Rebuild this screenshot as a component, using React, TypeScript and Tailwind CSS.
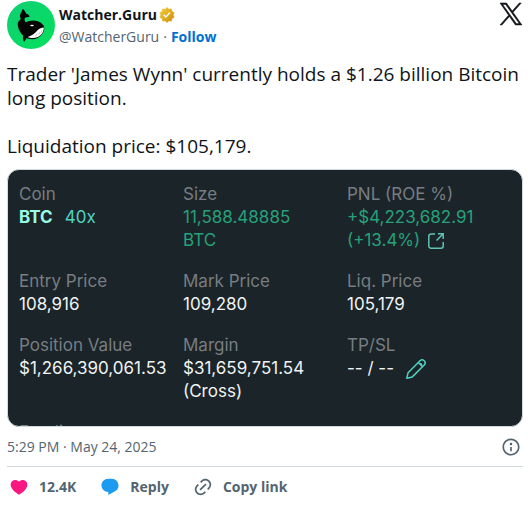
import React from 'react'

interface PositionField {
  label: string
  content: React.ReactNode
}

function ExternalIcon() {
  return (
    <svg viewBox="0 0 16 16" className="h-4 w-4 shrink-0" fill="none" stroke="#5fc4b3" strokeWidth="1.5">
      <path d="M7 1H3a2.2 2.2 0 0 0-2.2 2.2V13A2.2 2.2 0 0 0 3 15.2h10a2.2 2.2 0 0 0 2.2-2.2V9" />
      <path d="M10 .8h5.2V6M15 1L8.5 7.500" />
    </svg>
  )
}

function PencilIcon() {
  return (
    <svg viewBox="0 0 20 20" className="block h-5 w-5" fill="none" stroke="#50d2c1" strokeWidth="1.5" strokeLinejoin="round">
      <path d="M.8 19.200l1.300-5.500L14 1.800a2.550 2.550 0 0 1 4.200 4.200L6.300 17.900z" />
      <path d="M12.300 3.500l4.200 4.200M14.200 4.400c1 .1 1.500.6 1.500 1.500" />
    </svg>
  )
}

const fields: PositionField[] = [
  {
    label: 'Coin',
    content: (
      <div className="flex gap-3 text-[#50d2c1]">
        <span className="font-bold text-[#97fce4]">BTC</span>
        <span>40x</span>
      </div>
    ),
  },
  {
    label: 'Size',
    content: (
      <div className="text-[#26a17b]">
        11,588.48885
        <br />
        BTC
      </div>
    ),
  },
  {
    label: 'PNL (ROE %)',
    content: (
      <div className="text-[#26a17b]">
        +$4,223,682.91
        <div className="flex items-center gap-2">
          (+13.4%)
          <a href="#share" aria-label="Share position">
            <ExternalIcon />
          </a>
        </div>
      </div>
    ),
  },
  { label: 'Entry Price', content: '108,916' },
  { label: 'Mark Price', content: '109,280' },
  { label: 'Liq. Price', content: '105,179' },
  { label: 'Position Value', content: '$1,266,390,061.53' },
  {
    label: 'Margin',
    content: (
      <>
        $31,659,751.54
        <br />
        (Cross)
      </>
    ),
  },
  {
    label: 'TP/SL',
    content: (
      <div className="flex items-center gap-3">
        -- / --
        <button type="button" aria-label="Edit TP/SL">
          <PencilIcon />
        </button>
      </div>
    ),
  },
  { label: 'Funding', content: '' },
]

function Avatar() {
  return (
    <svg viewBox="0 0 48 48" className="h-12 w-12 shrink-0">
      <defs>
        <linearGradient id="avatar" x1="0" y1="0" x2="1" y2="1">
          <stop offset="0" stopColor="#10cf74" />
          <stop offset="1" stopColor="#03e05c" />
        </linearGradient>
      </defs>
      <circle cx="24" cy="24" r="24" fill="url(#avatar)" />
      <path
        d="M15.500 8c2 .8 2.800 2.700 3.700 4.800 1.600.2 3.300 1.300 3.300 3.200-1.700.2-3.800 0-4.600 1.100-.9 1.200-.3 3.400 1 4.400 4-2.500 11.500-2.800 15.500.8 1.900 1.700 3 3.300 2.900 5.200-.2 5.100-5.200 10.500-11.800 10.700-2.900.1-4.600-.5-6.100-1.200-.5 1.600-1.300 2.800-2.500 3.700-.9-2-1.200-4.300-.7-6.100-3-2.900-5.600-7.200-5.500-12.100.1-2.300 2.600-3.200 3.200-5-.9-1.100-1.100-2.300-.8-3.600.5-1.900 1.900-3.500 2.400-5.900z"
        fill="#050505"
      />
      <path
        d="M36.800 26.500c-2.300.3-4.300.7-6 2.600-2.600 3-5.800 5.900-10 6.800 2.300 1.300 6.600 1.700 10 .1 4-1.900 6.200-5.700 6-9.500z"
        fill="#fff"
      />
      <path d="M28.500 35.500l1.500-3M31.500 34l1.500-3M34 31.500l1-2" stroke="#999" strokeWidth=".5" />
      <ellipse cx="25" cy="24.500" rx="1.800" ry=".8" fill="#fff" />
    </svg>
  )
}

function GoldBadge() {
  return (
    <svg viewBox="1 1 20 20" className="h-4 w-4" role="img" aria-label="Verified">
      <defs>
        <linearGradient id="gold" x1="0" y1="0" x2="1" y2="1">
          <stop offset="0" stopColor="#f0cf3c" />
          <stop offset=".5" stopColor="#e0ac20" />
          <stop offset="1" stopColor="#cb8a12" />
        </linearGradient>
      </defs>
      <path
        d="M13.324 3.848L11 1.6 8.676 3.848l-3.201-.453-.559 3.184L2.06 8.095 3.48 11l-1.420 2.904 2.856 1.516.559 3.184 3.201-.452L11 20.400l2.324-2.248 3.201.453.559-3.184 2.856-1.516L18.520 11l1.420-2.905-2.856-1.516-.559-3.184z"
        fill="url(#gold)"
        stroke="url(#gold)"
        strokeWidth=".8"
      />
      <path d="M6.234 11.423l3.428 3.428 5.683-6.206-1.347-1.247-4.400 4.795-2.072-2.072z" fill="#fff" />
    </svg>
  )
}

export default function App() {
  return (
    <article className="bg-white pt-px pr-[5px] pb-3 pl-[7px] font-['Open_Sans',sans-serif] text-[#0f1419]">
      <header className="flex items-start">
        <Avatar />
        <div className="ml-1 flex-1 text-sm">
          <div className="flex h-6 items-center gap-0.5 pt-1">
            <a href="#profile" className="font-bold">
              Watcher.Guru
            </a>
            <GoldBadge />
          </div>
          <div className="flex h-6 items-center gap-1 text-[#536471]">
            <a href="#profile">@WatcherGuru</a>
            <span>·</span>
            <a href="#follow" className="font-bold text-[#006fd6]">
              Follow
            </a>
          </div>
        </div>
        <a href="#post" aria-label="View on X" className="pt-0.5 pr-px">
          <svg viewBox="0 0 24 24" className="h-[22px] w-[22px] overflow-visible" fill="#0f1419" stroke="#0f1419" strokeWidth=".6">
            <path d="M14.258 10.152L23.176 0h-2.113l-7.747 8.813L7.133 0H0l9.352 13.328L0 23.973h2.113l8.176-9.309 6.531 9.309h7.133zm-2.895 3.293l-.949-1.328L2.875 1.560h3.246l6.086 8.523.945 1.328 7.910 11.078h-3.246z" />
          </svg>
        </a>
      </header>

      <p className="mt-[13px] text-[19px] leading-6">
        Trader 'James Wynn' currently holds a $1.26 billion Bitcoin long position.
        <br />
        <br />
        Liquidation price: $105,179.
      </p>

      {/* Position card, last row is cut off by the frame */}
      <div className="mt-[11px] aspect-[2/1] overflow-hidden rounded-xl border border-[#cfd9de] bg-[#1b2429] px-[11px] pt-[13px]">
        <dl className="grid grid-cols-3 gap-y-[18px] font-[Inter,sans-serif] text-[17px] leading-[23px] text-[#f0f3f3]">
          {fields.map((field) => (
            <div key={field.label} className="whitespace-nowrap">
              <dt className="text-[#777d82]">{field.label}</dt>
              <dd>{field.content}</dd>
            </div>
          ))}
        </dl>
      </div>

      <div className="flex h-10 items-center justify-between border-b border-[#cfd9de] pr-0.5 text-sm text-[#536471]">
        <a href="#post">5:29 PM · May 24, 2025</a>
        <a href="#info" aria-label="Ads info and privacy">
          <svg viewBox="0 0 24 24" className="h-5 w-5" fill="#536471">
            <path d="M13.500 8.500c0 .83-.67 1.500-1.500 1.500s-1.500-.67-1.500-1.500S11.170 7 12 7s1.500.67 1.500 1.500zM13 17v-5h-2v5h2zm-1 5.250c5.660 0 10.250-4.590 10.250-10.250S17.660 1.750 12 1.750 1.750 6.340 1.750 12 6.340 22.250 12 22.250zM20.250 12c0 4.560-3.690 8.250-8.250 8.250S3.750 16.560 3.750 12 7.440 3.750 12 3.750s8.250 3.690 8.250 8.250z" />
          </svg>
        </a>
      </div>

      <div className="flex h-10 items-center gap-6 pl-0.5 text-sm font-bold text-[#536471]">
        <button type="button" className="flex items-center gap-2.5">
          <svg viewBox="0 0 24 24" className="h-5 w-5" fill="#f91880">
            <path d="M20.884 13.190c-1.351 2.480-4.001 5.120-8.379 7.670l-.503.3-.504-.3c-4.379-2.550-7.029-5.190-8.382-7.670-1.360-2.500-1.410-4.860-.514-6.670.887-1.790 2.647-2.910 4.601-3.010 1.651-.09 3.368.56 4.798 2.010 1.429-1.450 3.146-2.100 4.796-2.010 1.954.1 3.714 1.220 4.601 3.010.896 1.810.846 4.170-.514 6.670z" />
          </svg>
          12.4K
        </button>
        <button type="button" className="flex items-center gap-2.5">
          <svg viewBox="0 0 24 24" className="h-5 w-5" fill="#1d9bf0">
            <path d="M1.751 10c0-4.420 3.584-8 8.005-8h4.366c4.490 0 8.129 3.640 8.129 8.130 0 2.960-1.607 5.680-4.196 7.110l-8.054 4.460v-3.690h-.067c-4.490.1-8.183-3.510-8.183-8.010z" />
          </svg>
          Reply
        </button>
        <button type="button" className="flex items-center gap-2.5">
          <svg viewBox="0 0 24 24" className="h-5 w-5" fill="#536471">
            <path d="M18.360 5.640c-1.950-1.960-5.110-1.960-7.070 0L9.880 7.050 8.460 5.640l1.420-1.420c2.730-2.730 7.160-2.730 9.900 0 2.730 2.740 2.730 7.170 0 9.900l-1.420 1.420-1.410-1.420 1.410-1.410c1.960-1.960 1.960-5.120 0-7.070zm-2.120 3.530l-7.070 7.070-1.410-1.410 7.070-7.070 1.410 1.410zm-12.020.71l1.420-1.420 1.410 1.420-1.410 1.410c-1.960 1.960-1.960 5.120 0 7.070 1.950 1.960 5.110 1.960 7.070 0l1.410-1.410 1.420 1.410-1.420 1.420c-2.730 2.730-7.160 2.730-9.900 0-2.730-2.740-2.730-7.170 0-9.900z" />
          </svg>
          Copy link
        </button>
      </div>
    </article>
  )
}
